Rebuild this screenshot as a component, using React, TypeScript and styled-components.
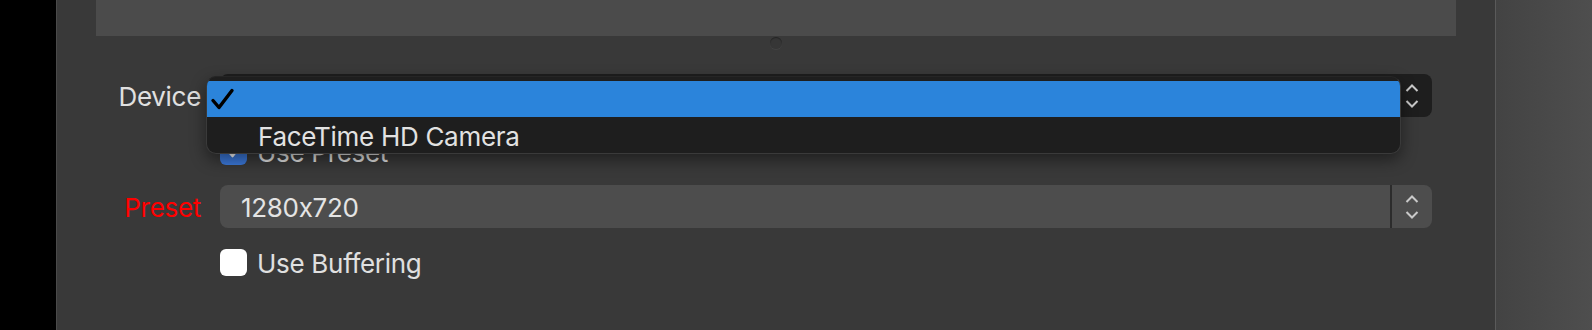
import React from 'react';
import styled, { createGlobalStyle } from 'styled-components';

const Global = createGlobalStyle`
  html, body {
    margin: 0;
    padding: 0;
    background: #000;
  }
  body {
    font-family: 'Inter', 'Noto Sans', sans-serif;
    font-feature-settings: 'calt' 0;
    letter-spacing: -0.3px;
    -webkit-font-smoothing: antialiased;
  }
`;

const Screen = styled.div`
  display: flex;
  width: 1592px;
  height: 330px;
  overflow: hidden;
`;

const Gutter = styled.div`
  flex: 0 0 56px;
  background: #000;
`;

const Panel = styled.div`
  flex: 0 0 1440px;
  box-sizing: border-box;
  display: flex;
  flex-direction: column;
  background: #393939;
  border-left: 1px solid #4a4a4a;
  border-right: 1px solid #5a5a5a;
`;

const SidePanel = styled.div`
  flex: 1;
  background: linear-gradient(90deg, #434343, #4e4e4e);
`;

const Preview = styled.div`
  height: 36px;
  margin: 0 39px;
  background: #4b4b4b;
`;

const Knob = styled.div`
  align-self: center;
  width: 12px;
  height: 12px;
  margin-top: 1px;
  border-radius: 50%;
  background: #363636;
  box-shadow: inset 0 1px 1px rgba(0, 0, 0, 0.35), 0 1px 0 rgba(255, 255, 255, 0.05);
`;

const Form = styled.div`
  display: grid;
  grid-template-columns: 144px 1212px;
  column-gap: 19px;
  row-gap: 19px;
  margin-top: 25px;
  align-items: center;
`;

const Label = styled.div<{ $warn?: boolean }>`
  text-align: right;
  font-size: 26px;
  padding-top: 2px;
  color: ${(p) => (p.$warn ? '#ff0000' : '#e0e0e0')};
  white-space: nowrap;
`;

const Field = styled.div`
  position: relative;
  grid-column: 2;
`;

const Select = styled.div<{ $dark?: boolean }>`
  display: flex;
  height: 43px;
  border-radius: 8px;
  background: ${(p) => (p.$dark ? '#1e1e1e' : '#4d4d4d')};
  color: #e4e4e4;
  font-size: 26px;
`;

const Value = styled.div<{ $bare?: boolean }>`
  flex: 1;
  display: flex;
  align-items: center;
  padding: 2px 0 0 21px;
  border-right: ${(p) => (p.$bare ? 'none' : '2px solid #2c2c2c')};
`;

const Stepper = styled.div`
  flex: 0 0 40px;
  display: flex;
  flex-direction: column;
  align-items: center;
  justify-content: center;
  gap: 8px;
`;

const Menu = styled.div`
  position: absolute;
  left: -14px;
  top: 2px;
  width: 1195px;
  box-sizing: border-box;
  padding: 4px 0 0;
  background: #1e1e1e;
  border-radius: 10px;
  border: 1px solid #3a3a3a;
  border-top-color: #252525;
  box-shadow: 0 6px 16px rgba(0, 0, 0, 0.45);
  overflow: hidden;
  z-index: 10;
`;

const Item = styled.div<{ $active?: boolean }>`
  position: relative;
  height: 36px;
  display: flex;
  align-items: center;
  padding: 2px 0 0 51px;
  box-sizing: border-box;
  font-size: 26px;
  color: ${(p) => (p.$active ? '#000' : '#e2e2e2')};
  background: ${(p) => (p.$active ? '#2b84db' : 'transparent')};
`;

const Tick = styled.svg`
  position: absolute;
  left: 3px;
  top: 7px;
`;

const CheckRow = styled.label`
  grid-column: 2;
  display: flex;
  align-items: center;
  gap: 10px;
  height: 29px;
  margin-top: 1px;
  font-size: 26px;
  color: #e0e0e0;
`;

const Caption = styled.span`
  padding-top: 2px;
`;

const Box = styled.span<{ $on?: boolean }>`
  display: flex;
  align-items: center;
  justify-content: center;
  width: 27px;
  height: 27px;
  box-sizing: border-box;
  border-radius: 6px;
  background: ${(p) => (p.$on ? '#3b78d9' : '#ffffff')};
`;

const Chevron = ({ up }: { up?: boolean }) => (
  <svg width="14" height="8" viewBox="0 0 14 8">
    <path
      d={up ? 'M1.5 7 L7 1.5 L12.5 7' : 'M1.5 1 L7 6.5 L12.5 1'}
      fill="none"
      stroke="#c9c9c9"
      strokeWidth="2"
    />
  </svg>
);

export default function App() {
  return (
    <>
      <Global />
      <Screen>
        <Gutter />
        <Panel>
          <Preview />
          <Knob />
          <Form>
            <Label>Device</Label>
            <Field>
              <Select $dark>
                <Value $bare />
                <Stepper>
                  <Chevron up />
                  <Chevron />
                </Stepper>
              </Select>
              <Menu>
                <Item $active>
                  <Tick width="26" height="22" viewBox="0 0 26 22">
                    <path d="M3 12.5 L9 19.5 L22 2.5" fill="none" stroke="#000" strokeWidth="3.4" strokeLinecap="round" strokeLinejoin="round" />
                  </Tick>
                </Item>
                <Item>FaceTime HD Camera</Item>
              </Menu>
            </Field>

            <CheckRow>
              <Box $on>
                <svg width="16" height="14" viewBox="0 0 16 14">
                  <path d="M3 7 L6.5 11 L13 3" fill="none" stroke="#fff" strokeWidth="2.6" strokeLinecap="round" strokeLinejoin="round" />
                </svg>
              </Box>
              <Caption>Use Preset</Caption>
            </CheckRow>

            <Label $warn>Preset</Label>
            <Field>
              <Select>
                <Value>1280x720</Value>
                <Stepper>
                  <Chevron up />
                  <Chevron />
                </Stepper>
              </Select>
            </Field>

            <CheckRow>
              <Box />
              <Caption>Use Buffering</Caption>
            </CheckRow>
          </Form>
        </Panel>
        <SidePanel />
      </Screen>
    </>
  );
}
